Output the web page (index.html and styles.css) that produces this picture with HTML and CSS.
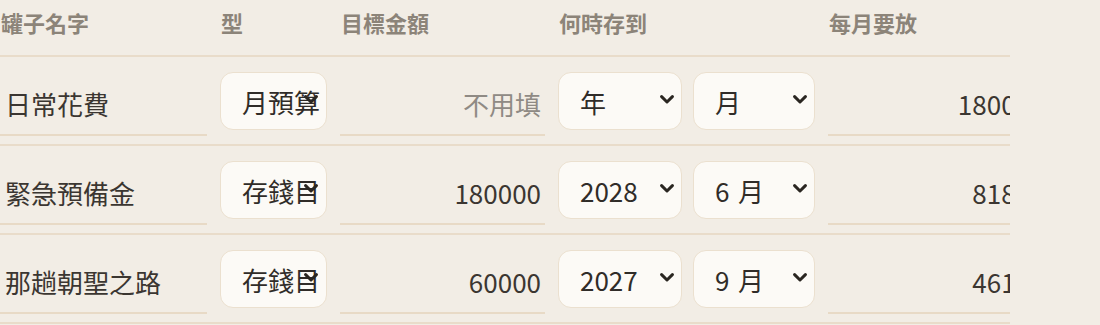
FILE: index.html
```html
<!DOCTYPE html>
<html>
    <head>
        <meta charset="UTF-8">
        <meta name="viewport" content="width=device-width, initial-scale=1.0">
        <title>存錢罐</title>
        <link rel="stylesheet" href="styles.css">
    </head>
    <body>
        <div class="jar-sheet">
            <div class="jar-row jar-head">
                <div>罐子名字</div>
                <div>型</div>
                <div>目標金額</div>
                <div>何時存到</div>
                <div>每月要放</div>
            </div>

            <div class="jar-row">
                <input class="cell-input" type="text" value="日常花費">
                <span class="pick type-pick">
                    <select class="cell-select">
                        <option selected>月預算</option>
                        <option>存錢目標</option>
                    </select>
                    <svg class="chev" viewBox="0 0 14 9"><path d="M1.6 1.6 L7 7 L12.4 1.6"/></svg>
                </span>
                <input class="cell-input num" type="text" placeholder="不用填">
                <div class="date-pick">
                    <span class="pick year-pick">
                        <select class="cell-select">
                            <option selected>年</option>
                            <option>2026</option>
                            <option>2027</option>
                            <option>2028</option>
                        </select>
                        <svg class="chev" viewBox="0 0 14 9"><path d="M1.6 1.6 L7 7 L12.4 1.6"/></svg>
                    </span>
                    <span class="pick month-pick">
                        <select class="cell-select">
                            <option selected>月</option>
                            <option>6&#8196;月</option>
                            <option>9&#8196;月</option>
                        </select>
                        <svg class="chev" viewBox="0 0 14 9"><path d="M1.6 1.6 L7 7 L12.4 1.6"/></svg>
                    </span>
                </div>
                <input class="cell-input num" type="text" value="18000">
            </div>

            <div class="jar-row">
                <input class="cell-input" type="text" value="緊急預備金">
                <span class="pick type-pick">
                    <select class="cell-select">
                        <option>月預算</option>
                        <option selected>存錢目標</option>
                    </select>
                    <svg class="chev" viewBox="0 0 14 9"><path d="M1.6 1.6 L7 7 L12.4 1.6"/></svg>
                </span>
                <input class="cell-input num" type="text" value="180000">
                <div class="date-pick">
                    <span class="pick year-pick">
                        <select class="cell-select">
                            <option>年</option>
                            <option>2027</option>
                            <option selected>2028</option>
                        </select>
                        <svg class="chev" viewBox="0 0 14 9"><path d="M1.6 1.6 L7 7 L12.4 1.6"/></svg>
                    </span>
                    <span class="pick month-pick">
                        <select class="cell-select">
                            <option>月</option>
                            <option selected>6&#8196;月</option>
                            <option>9&#8196;月</option>
                        </select>
                        <svg class="chev" viewBox="0 0 14 9"><path d="M1.6 1.6 L7 7 L12.4 1.6"/></svg>
                    </span>
                </div>
                <input class="cell-input num" type="text" value="8182" readonly>
            </div>

            <div class="jar-row">
                <input class="cell-input" type="text" value="那趟朝聖之路">
                <span class="pick type-pick">
                    <select class="cell-select">
                        <option>月預算</option>
                        <option selected>存錢目標</option>
                    </select>
                    <svg class="chev" viewBox="0 0 14 9"><path d="M1.6 1.6 L7 7 L12.4 1.6"/></svg>
                </span>
                <input class="cell-input num" type="text" value="60000">
                <div class="date-pick">
                    <span class="pick year-pick">
                        <select class="cell-select">
                            <option>年</option>
                            <option selected>2027</option>
                            <option>2028</option>
                        </select>
                        <svg class="chev" viewBox="0 0 14 9"><path d="M1.6 1.6 L7 7 L12.4 1.6"/></svg>
                    </span>
                    <span class="pick month-pick">
                        <select class="cell-select">
                            <option>月</option>
                            <option>6&#8196;月</option>
                            <option selected>9&#8196;月</option>
                        </select>
                        <svg class="chev" viewBox="0 0 14 9"><path d="M1.6 1.6 L7 7 L12.4 1.6"/></svg>
                    </span>
                </div>
                <input class="cell-input num" type="text" value="4616" readonly>
            </div>
        </div>
    </body>
</html>
```

FILE: styles.css
```css
body {
    margin: 0;
    padding: 0;
    background: #f2ede5;
    font-family: "Noto Sans CJK TC", "Noto Sans", sans-serif;
    color: #3a352f;
}

/* the table is wider than the panel, so the right side gets cut */
.jar-sheet {
    width: 1010px;
    overflow: hidden;
}

.jar-row {
    display: grid;
    grid-template-columns: 207px 107px 205px 257px 206px;
    column-gap: 13px;
    align-items: start;
    width: 1034px;
    height: 89px;
    padding-top: 15px;
    box-sizing: border-box;
    border-bottom: 2px solid #e9dcca;
}

.jar-head {
    height: 57px;
    padding-top: 9px;
    font-size: 22px;
    font-weight: 700;
    line-height: 26px;
    color: #8c8479;
}

.jar-head div {
    padding-left: 1px;
}

.cell-input {
    width: 100%;
    height: 64px;
    box-sizing: border-box;
    padding: 0 4px 0 5px;
    border: none;
    border-bottom: 2px solid #e8dac6;
    background: transparent;
    font-family: inherit;
    font-size: 26px;
    color: #3b3631;
    outline: none;
}

.cell-input.num {
    text-align: right;
}

.cell-input::placeholder {
    color: #8f8a84;
}

.pick {
    position: relative;
    display: block;
}

.cell-select {
    display: block;
    width: 100%;
    height: 58px;
    box-sizing: border-box;
    padding: 0 6px 0 21px;
    border: 1.5px solid #ebe0cf;
    border-radius: 13px;
    background-color: #fcfaf6;
    font-family: inherit;
    font-size: 26px;
    color: #302c28;
    appearance: none;
    -webkit-appearance: none;
}

.chev {
    position: absolute;
    right: 8px;
    top: 23px;
    width: 14px;
    height: 9px;
    pointer-events: none;
}

.chev path {
    fill: none;
    stroke: #2a2621;
    stroke-width: 3;
    stroke-linecap: round;
    stroke-linejoin: round;
}

.type-pick .chev {
    right: 9px;
}

.date-pick {
    display: flex;
    gap: 11px;
}

.year-pick {
    width: 124px;
}

.month-pick {
    width: 122px;
}
```
